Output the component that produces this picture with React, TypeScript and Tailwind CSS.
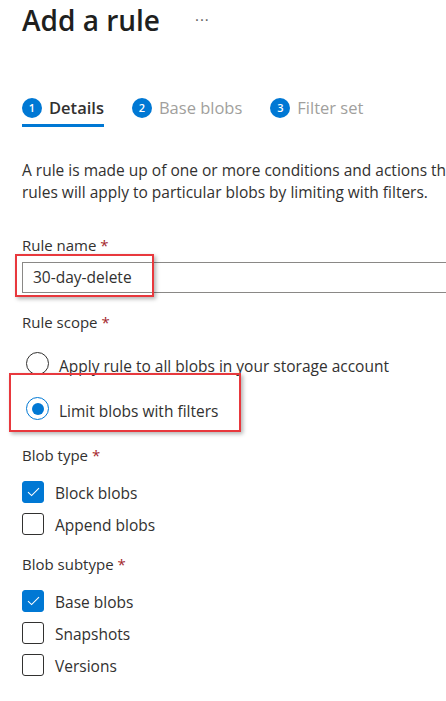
import React from 'react';

const font = { fontFamily: '"Open Sans", "Noto Sans", sans-serif' };

const Star = () => <span className="text-[#a4262c]"> *</span>;

const Label = ({ children, className = '' }: { children: React.ReactNode; className?: string }) => (
  <div className={`text-[15px] leading-[20px] text-[#323130] ${className}`}>
    {children}
    <Star />
  </div>
);

const Radio = ({ checked, label }: { checked?: boolean; label: string }) => (
  <div className="flex items-center h-[23px]">
    <span
      className={`flex h-[23px] w-[23px] shrink-0 items-center justify-center rounded-full border ${
        checked ? 'border-[#0078d4]' : 'border-[#323130]'
      }`}
    >
      {checked && <span className="h-[12px] w-[12px] rounded-full bg-[#0078d4]" />}
    </span>
    <span className="ml-[10px] mt-[6px] whitespace-nowrap text-[15.5px] text-[#323130]">{label}</span>
  </div>
);

const Checkbox = ({ checked, label }: { checked?: boolean; label: string }) => (
  <div className="flex items-center h-[22px]">
    <span
      className={`flex h-[22px] w-[22px] shrink-0 items-center justify-center rounded-[3px] border ${
        checked ? 'border-[#0078d4] bg-[#0078d4]' : 'border-[#323130] bg-white'
      }`}
    >
      {checked && (
        <svg width="13" height="10" viewBox="0 0 13 10" fill="none">
          <path d="M1 5.2 4.6 8.6 12 1.2" stroke="white" strokeWidth="1.1" />
        </svg>
      )}
    </span>
    <span className="ml-[11px] mt-[3px] text-[15.5px] text-[#323130]">{label}</span>
  </div>
);

const Step = ({ n, label, active }: { n: number; label: string; active?: boolean }) => (
  <div className="relative flex items-center h-[40px]">
    <span className="flex h-[20px] w-[20px] items-center justify-center rounded-full bg-[#0078d4] text-[11px] font-semibold text-white">
      {n}
    </span>
    <span className={`ml-[7px] text-[16.5px] ${active ? 'text-[#323130] font-semibold' : 'text-[#a19f9d]'}`}>
      {label}
    </span>
    {active && <span className="absolute left-0 right-0 bottom-[1px] h-[3px] bg-[#0078d4]" />}
  </div>
);

export default function App() {
  return (
    <div className="h-[701px] w-[446px] overflow-hidden bg-white" style={font}>
      <div className="pl-[22px]">
        <div className="flex items-center h-[40px]">
          <h1 className="text-[28px] font-semibold leading-[40px] text-[#201f1e]">Add a rule</h1>
          <span className="ml-[35px] mt-[-1px] text-[15px] tracking-[1px] text-[#605e5c]">···</span>
        </div>

        <div className="mt-[48px] flex gap-[28px]">
          <Step n={1} label="Details" active />
          <Step n={2} label="Base blobs" />
          <Step n={3} label="Filter set" />
        </div>

        <p className="mt-[31px] whitespace-nowrap text-[15.5px] leading-[22px] text-[#323130]">
          A rule is made up of one or more conditions and actions that
          <br />
          rules will apply to particular blobs by limiting with filters.
        </p>

        <Label className="mt-[32px]">Rule name</Label>
        <div className="relative mt-[7px]">
          <div className="flex h-[31px] w-[460px] items-center border border-[#8a8886] pl-[10px] text-[15.5px] text-[#323130]">
            30-day-delete
          </div>
          <div className="absolute left-[-7px] top-[-8px] h-[43px] w-[139px] border-2 border-[#e8383d] shadow-[2px_2px_4px_rgba(0,0,0,0.3)]" />
        </div>

        <Label className="mt-[19px]">Rule scope</Label>
        <div className="mt-[20px] pl-[4px]">
          <Radio label="Apply rule to all blobs in your storage account" />
          <div className="relative mt-[22px]">
            <Radio checked label="Limit blobs with filters" />
            <div className="absolute left-[-17px] top-[-24px] h-[59px] w-[232px] border-2 border-[#e8383d] shadow-[2px_2px_4px_rgba(0,0,0,0.3)]" />
          </div>
        </div>

        <Label className="mt-[25px]">Blob type</Label>
        <div className="mt-[16px] flex flex-col gap-[10px]">
          <Checkbox checked label="Block blobs" />
          <Checkbox label="Append blobs" />
        </div>

        <Label className="mt-[19px]">Blob subtype</Label>
        <div className="mt-[16px] flex flex-col gap-[10px]">
          <Checkbox checked label="Base blobs" />
          <Checkbox label="Snapshots" />
          <Checkbox label="Versions" />
        </div>
      </div>
    </div>
  );
}
